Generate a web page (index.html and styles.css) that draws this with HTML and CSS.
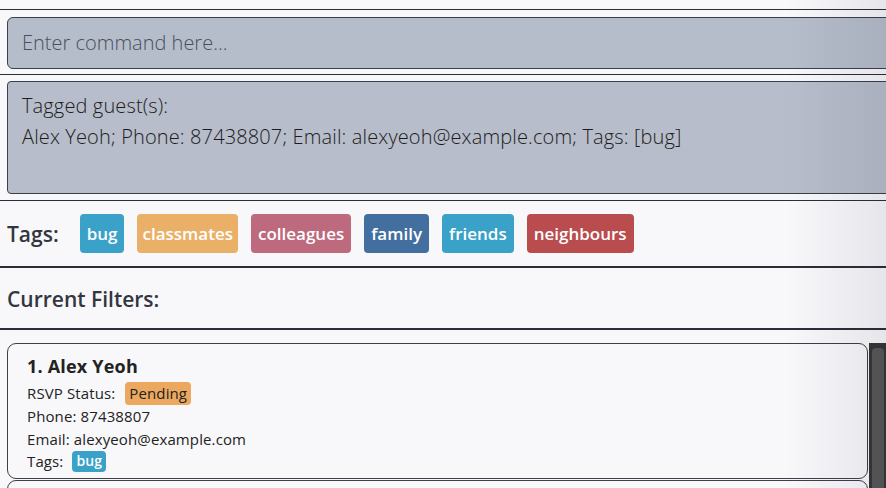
FILE: index.html
```html
<!DOCTYPE html>
<html>
<head>
<meta charset="utf-8">
<link rel="stylesheet" href="styles.css">
</head>
<body>
<div class="app">
  <div class="top"></div>
  <div class="section command-section">
    <div class="command-box">Enter command here...</div>
  </div>
  <div class="section result-section">
    <div class="result-box">
      <div class="result-line">Tagged guest(s):</div>
      <div class="result-line">Alex Yeoh; Phone: 87438807; Email: alexyeoh@example.com; Tags: [bug]</div>
    </div>
  </div>
  <div class="section tags-section">
    <span class="heading">Tags:</span>
    <div class="tag-list">
      <span class="tag tag-blue">bug</span>
      <span class="tag tag-orange">classmates</span>
      <span class="tag tag-pink">colleagues</span>
      <span class="tag tag-navy">family</span>
      <span class="tag tag-blue">friends</span>
      <span class="tag tag-red">neighbours</span>
    </div>
  </div>
  <div class="section filters-section">
    <span class="heading">Current Filters:</span>
  </div>
  <div class="list-section">
    <div class="cards">
      <div class="card">
        <div class="name">1. Alex Yeoh</div>
        <div class="row">RSVP Status: <span class="chip chip-pending">Pending</span></div>
        <div class="row">Phone: 87438807</div>
        <div class="row">Email: alexyeoh@example.com</div>
        <div class="row">Tags: <span class="chip chip-bug">bug</span></div>
      </div>
      <div class="card"></div>
    </div>
    <div class="scrollbar"><div class="thumb"></div></div>
  </div>
  <div class="shade"></div>
</div>
</body>
</html>
```
FILE: styles.css
```css
html, body {
  margin: 0;
  padding: 0;
  background: #f8f8fb;
  overflow: hidden;
}
body {
  font-family: "Open Sans", "Noto Sans", sans-serif;
  color: #222;
}
.app {
  position: relative;
  width: 886px;
  height: 488px;
  overflow: hidden;
}
.top {
  height: 9px;
  border-bottom: 1px solid #2b2d38;
}
.section {
  padding-left: 7px;
}
.command-section {
  padding-top: 7px;
  padding-bottom: 5px;
  border-bottom: 1px solid #2b2d38;
}
.command-box {
  margin-right: -10px;
  background: #b6bdca;
  border: 1px solid #3b3e4b;
  border-radius: 6px;
  box-sizing: border-box;
  height: 52px;
  padding-left: 14px;
  padding-bottom: 2px;
  display: flex;
  align-items: center;
  font-size: 20px;
  font-weight: 300;
  color: #4a4f5c;
}
.result-section {
  padding-top: 6px;
  padding-bottom: 6px;
  border-bottom: 1px solid #2b2d38;
}
.result-box {
  height: 113px;
  box-sizing: border-box;
  margin-right: -10px;
  background: #b7bdca;
  border: 1px solid #3b3e4b;
  border-radius: 4px;
  padding: 8px 14px;
  font-size: 20px;
  font-weight: 300;
  letter-spacing: 0.13px;
  color: #1c1c20;
  line-height: 31px;
}
.tags-section {
  height: 67px;
  box-sizing: border-box;
  display: flex;
  align-items: center;
  border-bottom: 2px solid #2b2d38;
}
.heading {
  font-size: 21px;
  font-weight: 600;
  color: #33363f;
}
.tag-list {
  display: flex;
  gap: 13px;
  margin-left: 21px;
}
.tag {
  height: 39px;
  display: inline-flex;
  align-items: center;
  padding: 0 7px;
  border-radius: 4px;
  color: #fff;
  font-size: 17px;
  font-weight: 600;
}
.tag-blue { background: #3aa1c8; }
.tag-orange { background: #ebb068; padding: 0 5px; }
.tag-pink { background: #bd697e; }
.tag-navy { background: #426f9f; }
.tag-red { background: #b94c4e; }
.filters-section {
  height: 62px;
  box-sizing: border-box;
  display: flex;
  align-items: center;
  padding-top: 2px;
  border-bottom: 2px solid #2b2d38;
}
.list-section {
  display: flex;
  padding-top: 13px;
  padding-left: 7px;
}
.cards {
  flex: 1;
  display: flex;
  flex-direction: column;
  gap: 1px;
}
.card {
  height: 136px;
  box-sizing: border-box;
  border: 1px solid #3b3e4b;
  border-radius: 9px;
  background: #f8f8fb;
  padding: 10px 19px;
  font-size: 15px;
  letter-spacing: 0.12px;
  color: #222;
}
.name {
  font-size: 18px;
  font-weight: 700;
  color: #222;
  line-height: 25px;
  margin-bottom: 3px;
  letter-spacing: 0.2px;
}
.row {
  line-height: 22.7px;
  display: flex;
  align-items: center;
}
.chip {
  display: inline-flex;
  align-items: center;
  border-radius: 4px;
  margin-left: 10px;
  padding: 0 4px;
}
.chip-pending {
  background: #eca85f;
  color: #222;
  height: 23px;
}
.chip-bug {
  background: #3aa1c8;
  color: #fff;
  height: 21px;
  font-weight: 600;
  font-size: 14px;
  padding: 0 4px;
  margin-left: 9px;
}
.scrollbar {
  width: 17px;
  height: 160px;
  background: #363636;
  margin-left: 1px;
  padding: 5px 2px 0 3px;
  box-sizing: border-box;
}
.thumb {
  height: 100%;
  background: #575757;
  border-radius: 4px 4px 0 0;
}
.shade {
  position: absolute;
  top: 0;
  right: 0;
  width: 100px;
  height: 100%;
  background: linear-gradient(to right, rgba(0,0,0,0), rgba(20,20,40,0.08));
  pointer-events: none;
}
```
